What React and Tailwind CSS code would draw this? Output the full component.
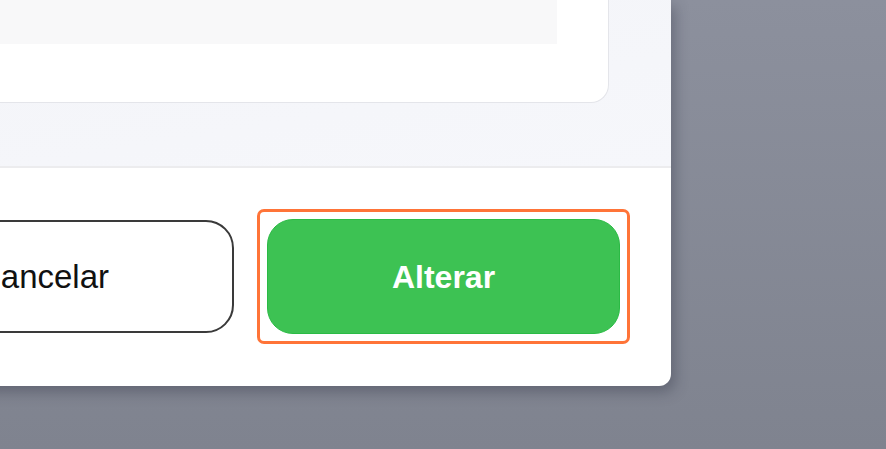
import React from 'react';

function FocusRing({ children }) {
  return (
    <div className="rounded-[7px] border-[3px] border-[#ff7438] p-[7px]">
      {children}
    </div>
  );
}

export default function App() {
  return (
    <div className="h-[449px] w-[886px] overflow-hidden bg-gradient-to-b from-[#8c909d] to-[#7f838f] font-['Liberation_Sans',Arial,sans-serif]">
      <div className="ml-[-300px] w-[971px] overflow-hidden rounded-br-[12px] bg-white shadow-[4px_6px_14px_rgba(40,44,60,0.35)]">
        {/* upper area */}
        <div className="h-[166px] bg-gradient-to-br from-[#f3f4f8] to-[#f6f7fb] pr-[62px]">
          <div className="h-[103px] rounded-br-[18px] border-b border-r border-[#e4e5ea] bg-white pr-[51px]">
            <div className="h-[44px] bg-[#f8f8f9]" />
          </div>
        </div>
        <div className="h-[2px] bg-[#ececee]" />

        {/* footer */}
        <div className="flex h-[218px] items-start justify-end gap-[23px] pr-[41px] pt-[41px]">
          <button className="mt-[11px] flex h-[113px] w-[382px] items-center justify-center rounded-[28px] border-2 border-[#3a3a3a] bg-white text-[33px] text-[#111]">
            Cancelar
          </button>
          <FocusRing>
            <button className="flex h-[115px] w-[353px] items-center justify-center rounded-[26px] border border-[#2bbb45] bg-[#3dc253] text-[32px] font-bold text-white">
              Alterar
            </button>
          </FocusRing>
        </div>
      </div>
    </div>
  );
}
